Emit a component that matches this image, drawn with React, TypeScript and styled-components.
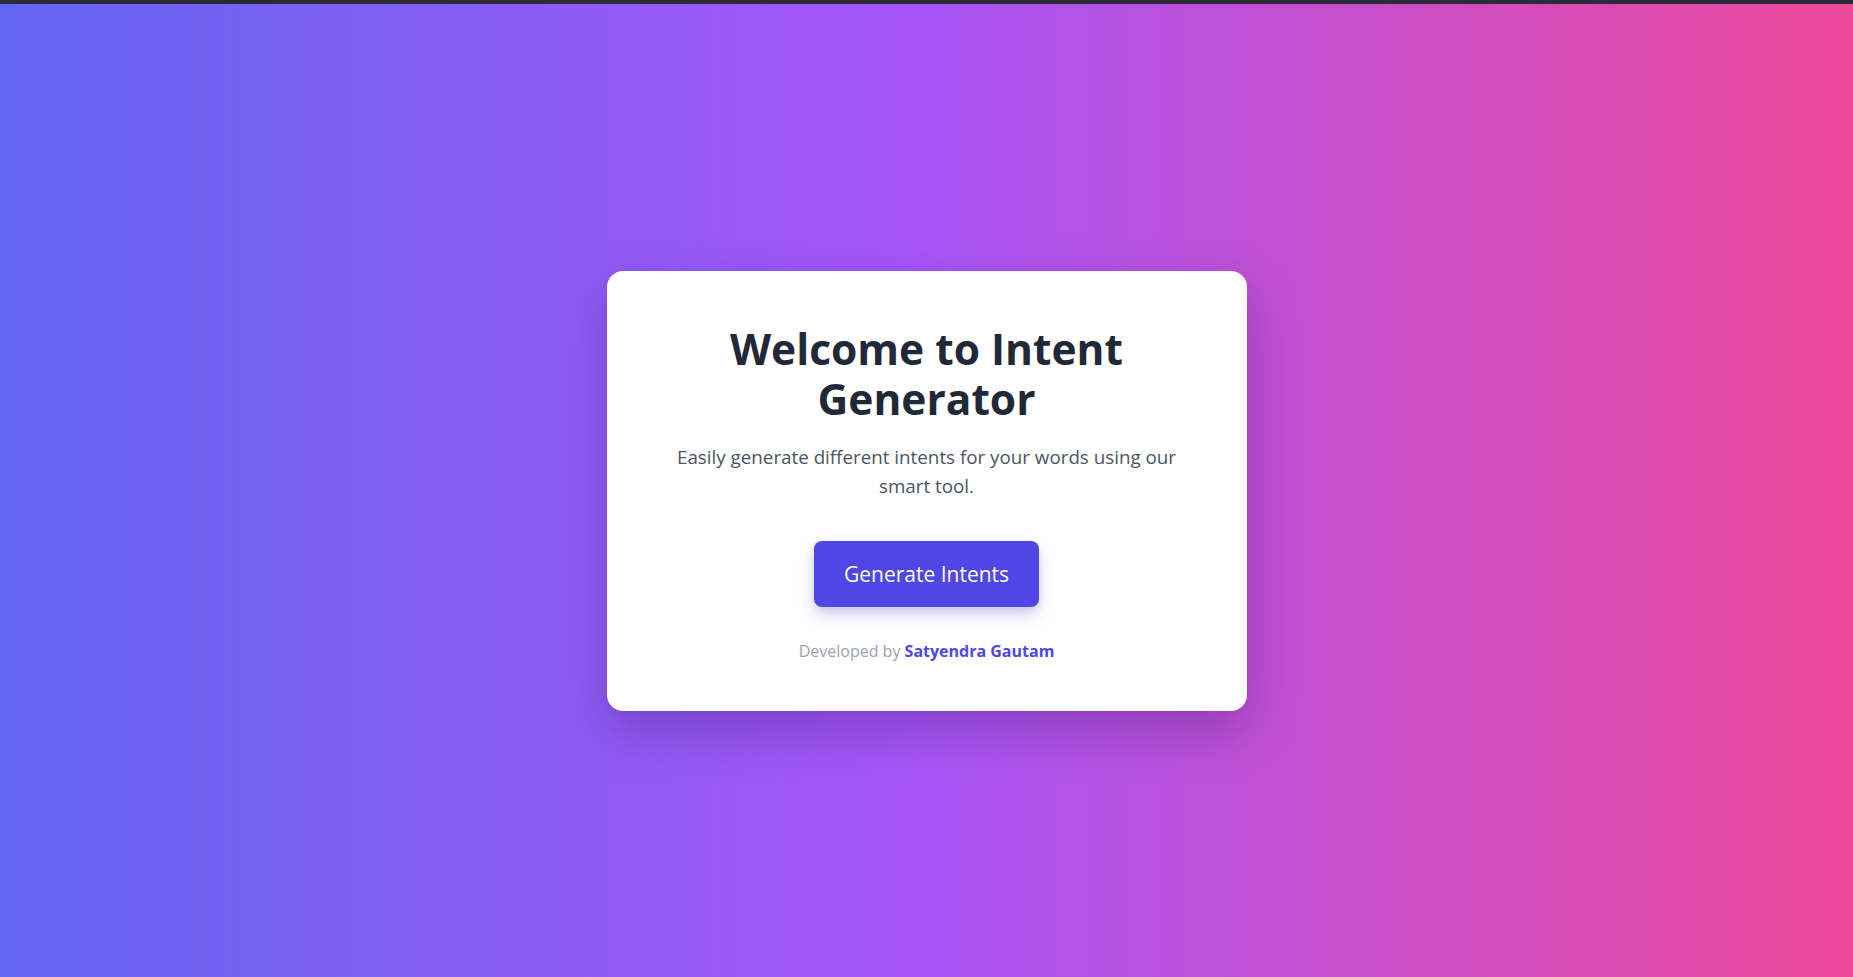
import React from "react";
import styled, { createGlobalStyle } from "styled-components";

const GlobalStyle = createGlobalStyle`
  html, body {
    margin: 0;
    padding: 0;
  }
  body {
    font-family: "Open Sans", "Noto Sans", "Liberation Sans", sans-serif;
  }
  * { box-sizing: border-box; }
`;

const Page = styled.main`
  height: 100vh;
  border-top: 4px solid #2c2a38;
  background: linear-gradient(90deg, #6366f1 0%, #a855f7 50%, #ec4899 100%);
  display: flex;
  align-items: center;
  justify-content: center;
`;

const Card = styled.section`
  width: 640px;
  background: #ffffff;
  border-radius: 16px;
  padding: 53px 48px 48px;
  box-shadow: 0 20px 50px rgba(40, 10, 80, 0.28);
  text-align: center;
  display: flex;
  flex-direction: column;
  align-items: center;
`;

const Title = styled.h1`
  margin: 0;
  font-size: 42.5px;
  line-height: 50px;
  font-weight: 700;
  color: #1f2937;
  max-width: 480px;
`;

const Subtitle = styled.p`
  margin: 19px 0 0;
  font-size: 18.8px;
  line-height: 29.5px;
  color: #4b5563;
  max-width: 525px;
`;

const PrimaryButton = styled.button`
  margin-top: 39px;
  height: 66px;
  padding: 0 30px;
  border: none;
  border-radius: 8px;
  background: #4f46e5;
  color: #ffffff;
  font-family: inherit;
  font-size: 21px;
  cursor: pointer;
  box-shadow: 0 8px 16px rgba(79, 70, 229, 0.22), 0 4px 8px rgba(0, 0, 0, 0.08);
`;

const Footer = styled.p`
  margin: 32px 0 0;
  font-size: 16px;
  line-height: 24px;
  color: #9ca3af;
`;

const Author = styled.a`
  color: #4f46e5;
  font-weight: 700;
  text-decoration: none;
`;

export default function App() {
  return (
    <>
      <GlobalStyle />
      <Page>
        <Card>
          <Title>Welcome to Intent Generator</Title>
          <Subtitle>
            Easily generate different intents for your words using our smart tool.
          </Subtitle>
          <PrimaryButton type="button">Generate Intents</PrimaryButton>
          <Footer>
            Developed by <Author href="#">Satyendra Gautam</Author>
          </Footer>
        </Card>
      </Page>
    </>
  );
}
